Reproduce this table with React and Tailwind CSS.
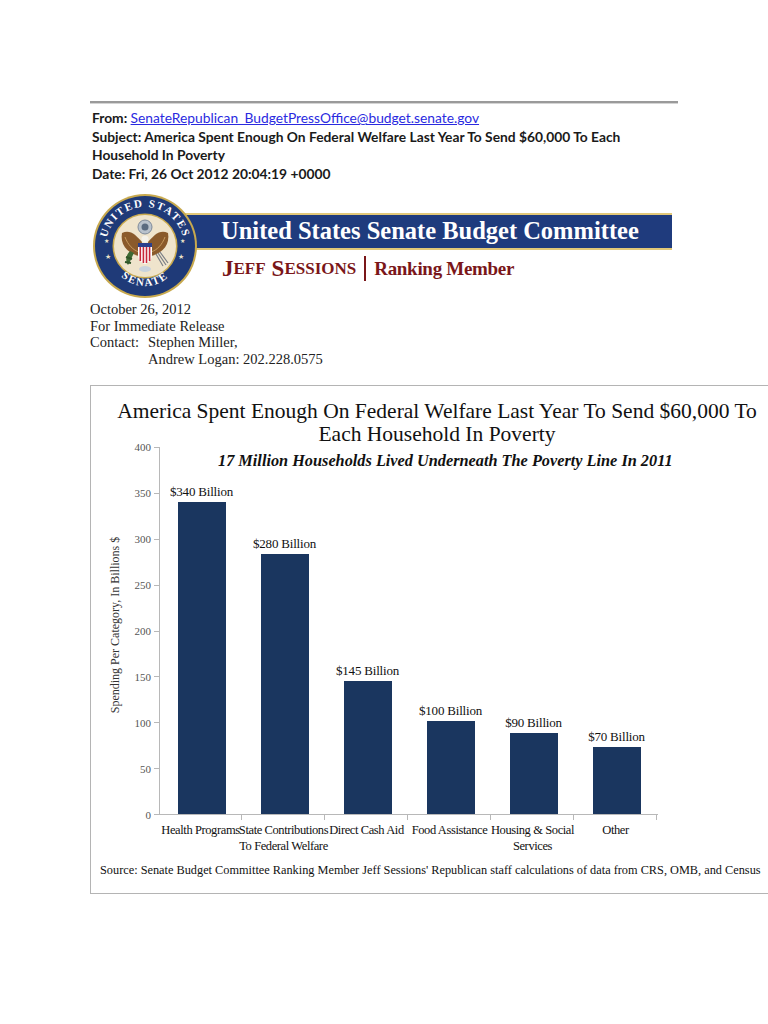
import React from 'react';

const bars = [
  { label: '$340 Billion', h: 312, name: ['Health Programs'] },
  { label: '$280 Billion', h: 260, name: ['State Contributions', 'To Federal Welfare'] },
  { label: '$145 Billion', h: 133, name: ['Direct Cash Aid'] },
  { label: '$100 Billion', h: 93, name: ['Food Assistance'] },
  { label: '$90 Billion', h: 81, name: ['Housing & Social', 'Services'] },
  { label: '$70 Billion', h: 67, name: ['Other'] },
];

const ticks = [400, 350, 300, 250, 200, 150, 100, 50, 0];

const Seal = () => (
  <svg width="106" height="106" viewBox="0 0 106 106">
    <defs>
      <path id="topArc" d="M 14 53 A 39 39 0 0 1 92 53" />
      <path id="botArc" d="M 18 58 A 35 35 0 0 0 88 58" />
    </defs>
    <circle cx="53" cy="53" r="52" fill="#c8a94e" />
    <circle cx="53" cy="53" r="50" fill="#1f3a78" />
    <circle cx="53" cy="53" r="32.5" fill="#c8a94e" />
    <circle cx="53" cy="53" r="31" fill="#efe4cc" />
    <text fontFamily="Liberation Serif, serif" fontWeight="bold" fontSize="11" fill="#ffffff" letterSpacing="1.5">
      <textPath href="#topArc" startOffset="50%" textAnchor="middle">UNITED STATES</textPath>
    </text>
    <text fontFamily="Liberation Serif, serif" fontWeight="bold" fontSize="11" fill="#ffffff" letterSpacing="1.5">
      <textPath href="#botArc" startOffset="50%" textAnchor="middle">SENATE</textPath>
    </text>
    <text x="13" y="66" fontSize="7" fill="#e9e2c8">★</text>
    <text x="86" y="66" fontSize="7" fill="#e9e2c8">★</text>
    <text x="12" y="50" fontSize="6" fill="#e9e2c8">★</text>
    <text x="88" y="50" fontSize="6" fill="#e9e2c8">★</text>
    {/* glory */}
    <circle cx="53" cy="34" r="7" fill="#b9c2cc" stroke="#7e8a99" strokeWidth="1" />
    <circle cx="53" cy="34" r="3.5" fill="#5a6b80" />
    {/* wings */}
    <path d="M 50 49 C 44 42 38 36 30 40 C 28 50 34 60 47 63 Z" fill="#8a5a2b" />
    <path d="M 56 49 C 62 42 68 36 76 40 C 78 50 72 60 59 63 Z" fill="#8a5a2b" />
    <path d="M 33 44 C 36 52 41 57 47 59" stroke="#c79a5e" strokeWidth="1" fill="none" />
    <path d="M 73 44 C 70 52 65 57 59 59" stroke="#c79a5e" strokeWidth="1" fill="none" />
    <circle cx="53" cy="46" r="3.5" fill="#f5f2ea" />
    {/* shield */}
    <path d="M 46 50 L 60 50 L 60 62 C 60 67 56 70 53 71 C 50 70 46 67 46 62 Z" fill="#ffffff" />
    <rect x="46" y="50" width="14" height="4" fill="#2b3f8c" />
    <rect x="47.5" y="54" width="1.6" height="14" fill="#c8283a" />
    <rect x="50.6" y="54" width="1.6" height="16" fill="#c8283a" />
    <rect x="53.7" y="54" width="1.6" height="16" fill="#c8283a" />
    <rect x="56.8" y="54" width="1.6" height="14" fill="#c8283a" />
    {/* branch & arrows */}
    <path d="M 38 58 C 34 62 33 67 36 72 C 39 68 40 63 42 60 Z" fill="#3e6b34" />
    <path d="M 34 64 L 40 66 M 33 69 L 39 70" stroke="#2f5528" strokeWidth="2" />
    <path d="M 66 60 L 74 72 M 68 59 L 76 70 M 64 61 L 71 73" stroke="#7b7f86" strokeWidth="1.2" />
    <ellipse cx="53" cy="76" rx="6" ry="3" fill="#c9d3dd" />
  </svg>
);

const App = () => {
  return (
    <div className="w-[768px] h-[1024px] bg-white overflow-hidden">
      <div className="pt-[101px] pl-[90px]">
        <div className="w-[588px] h-[3px] bg-[#9a9a9a] border-b border-[#d4d4d4]" />

        <div className="mt-[5px] ml-[2px] font-['Lato',sans-serif] font-bold text-[13.8px] leading-[18.5px] text-[#1a1a1a]">
          <div>
            From:{' '}
            <span className="text-[#2a2ae0] underline font-normal">
              SenateRepublican_BudgetPressOffice@budget.senate.gov
            </span>
          </div>
          <div>Subject: America Spent Enough On Federal Welfare Last Year To Send $60,000 To Each</div>
          <div>Household In Poverty</div>
          <div>Date: Fri, 26 Oct 2012 20:04:19 +0000</div>
        </div>

        <div className="mt-[10px] ml-[2px] flex">
          <div className="relative z-10 w-[106px] h-[106px]">
            <Seal />
          </div>
          <div className="-ml-[18px] pt-[20px]">
            <div className="w-[492px] h-[37px] bg-[#1f3b7d] border-y-2 border-[#e2c878] pl-[41px] flex items-center">
              <span className="font-['Liberation_Serif',serif] font-bold text-[24.5px] leading-none text-white">
                United States Senate Budget Committee
              </span>
            </div>
            <div className="mt-[6px] pl-[42px] flex items-center font-['Liberation_Serif',serif] font-bold text-[#7a1619] leading-none">
              <span className="text-[23px]">J</span>
              <span className="text-[17px]">EFF</span>
              <span className="text-[23px] ml-[6px]">S</span>
              <span className="text-[17px]">ESSIONS</span>
              <span className="mx-[8px] w-[2px] h-[25px] bg-[#7a1619]" />
              <span className="text-[19px] tracking-[-0.3px]">Ranking Member</span>
            </div>
          </div>
        </div>

        <div className="mt-[2px] font-['Liberation_Serif',serif] text-[14.5px] leading-[16.5px] text-[#222]">
          <div>October 26, 2012</div>
          <div>For Immediate Release</div>
          <div className="flex">
            <span className="w-[58px]">Contact:</span>
            <span>Stephen Miller,</span>
          </div>
          <div className="pl-[58px]">Andrew Logan: 202.228.0575</div>
        </div>

        <div className="mt-[18px] w-[694px] border-[1.5px] border-[#b4b4b4] font-['Liberation_Serif',serif] text-[#111]">
          <div className="pt-[14px] text-center text-[21.5px] leading-[23px]">
            <div>America Spent Enough On Federal Welfare Last Year To Send $60,000 To</div>
            <div>Each Household In Poverty</div>
          </div>

          <div className="mt-[1px] flex items-start">
            <div className="ml-[17px] w-[14px] h-[368px] flex items-center justify-center">
              <span className="-mt-[12px] -rotate-90 whitespace-nowrap text-[12px] text-[#333]">
                Spending Per Category, In Billions $
              </span>
            </div>
            <div className="-mt-[7px] w-[29px] h-[382px] flex flex-col justify-between text-right text-[11px] leading-[14px] text-[#555]">
              {ticks.map((t) => (
                <div key={t}>{t}</div>
              ))}
            </div>
            <div className="ml-[3px] w-[5px] h-[368px] flex flex-col justify-between">
              {ticks.map((t) => (
                <div key={t} className="h-px bg-[#b8b8b8]" />
              ))}
            </div>
            <div>
              <div className="relative h-[368px] border-l border-b border-[#b8b8b8] flex items-end">
                <div className="absolute top-[6px] left-[58px] whitespace-nowrap text-[16.3px] font-bold italic leading-none">
                  17 Million Households Lived Underneath The Poverty Line In 2011
                </div>
                {bars.map((b) => (
                  <div key={b.label} className="w-[83px] flex flex-col items-center">
                    <div className="mb-[3px] whitespace-nowrap text-[13px] tracking-[-0.2px] leading-[15px]">{b.label}</div>
                    <div className="w-[48px] bg-[#1a365f]" style={{ height: b.h }} />
                  </div>
                ))}
              </div>
              <div className="flex">
                {bars.map((b) => (
                  <div key={b.label} className="w-[83px] relative flex flex-col items-center pt-[7px] text-[12.5px] tracking-[-0.4px] leading-[16px] whitespace-nowrap">
                    <div className="absolute right-0 top-0 w-px h-[5px] bg-[#b8b8b8]" />
                    {b.name.map((n) => (
                      <div key={n}>{n}</div>
                    ))}
                  </div>
                ))}
              </div>
            </div>
          </div>

          <div className="mt-[9px] pb-[16px] pl-[9px] whitespace-nowrap text-[12.3px] leading-[14px]">
            Source: Senate Budget Committee Ranking Member Jeff Sessions' Republican staff calculations of data from CRS, OMB, and Census
          </div>
        </div>
      </div>
    </div>
  );
};

export default App;
